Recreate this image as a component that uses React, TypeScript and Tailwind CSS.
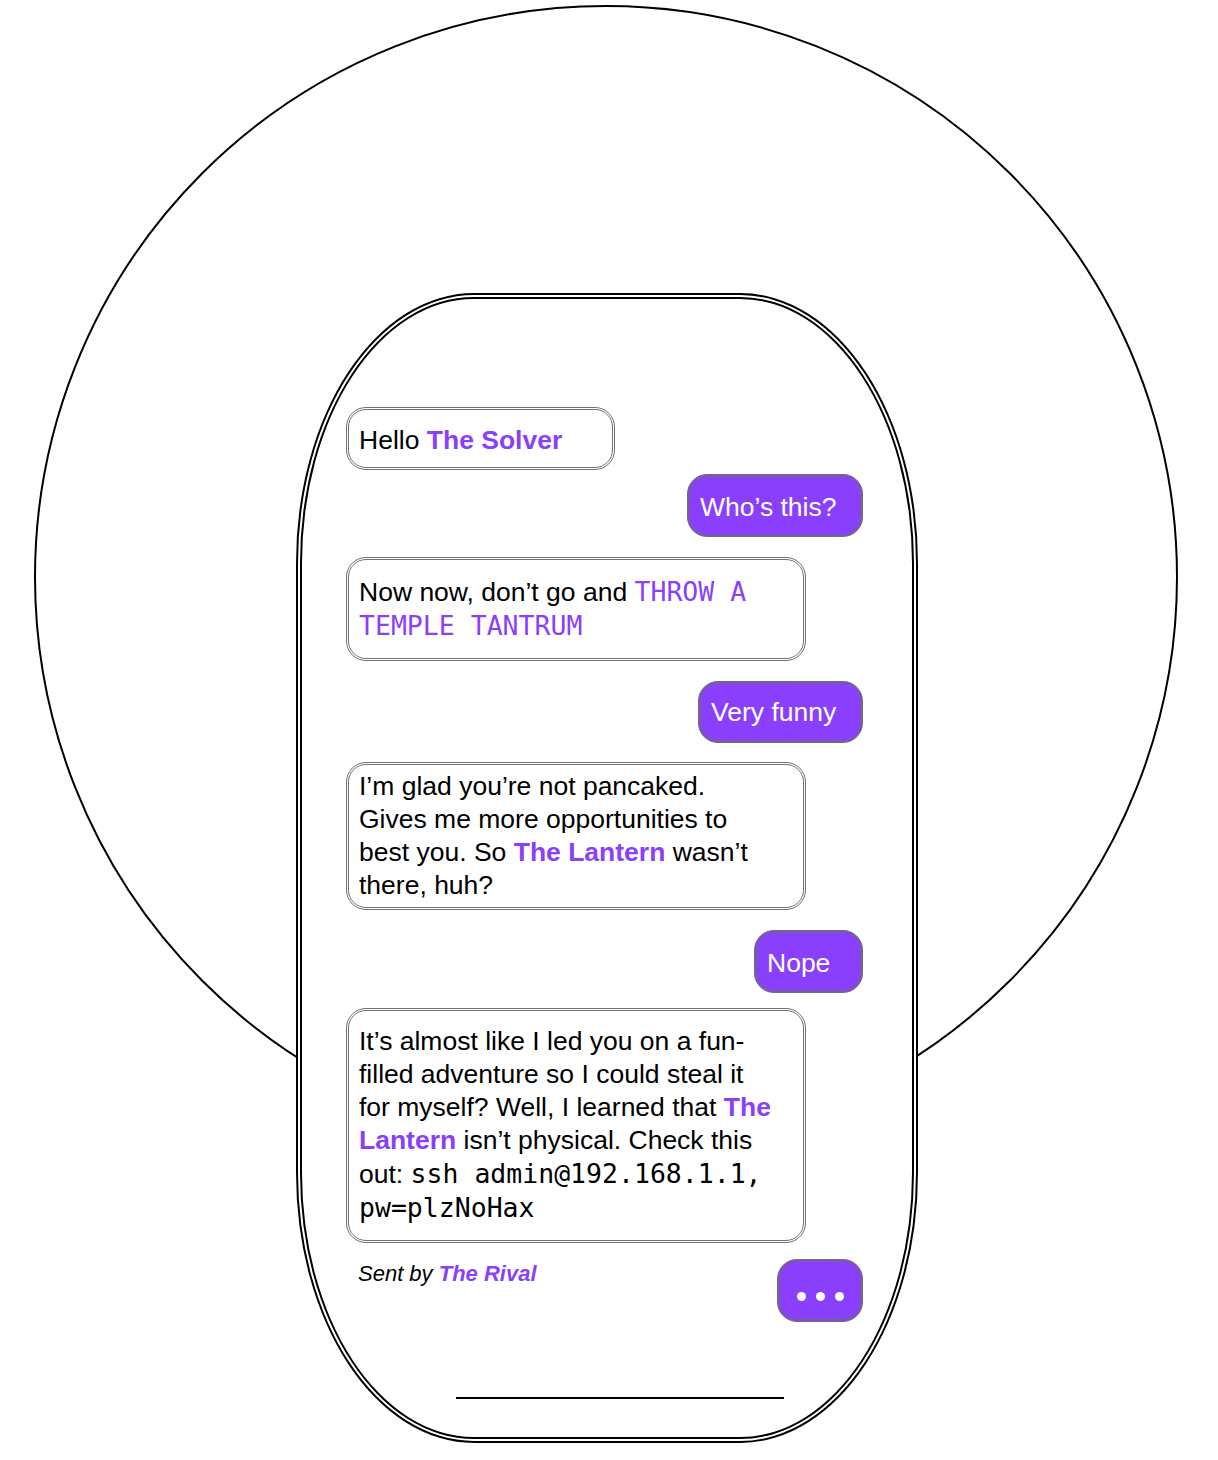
import type { ReactNode } from 'react'

const SANS = "font-['Liberation_Sans',Arial,sans-serif]"

function Hl({ children }: { children: ReactNode }) {
  return <span className="font-bold text-[#8a3ffc]">{children}</span>
}

function Mono({ children, purple }: { children: ReactNode; purple?: boolean }) {
  return (
    <span className={`font-['DejaVu_Sans_Mono',monospace] ${purple ? 'text-[#8a3ffc]' : 'text-black'}`}>
      {children}
    </span>
  )
}

interface BubbleProps {
  me?: boolean
  className?: string
  children: ReactNode
}

function Bubble({ me, className = '', children }: BubbleProps) {
  const tone = me
    ? 'self-end bg-[#8a3ffc] text-white whitespace-nowrap pr-[10px]'
    : 'self-start bg-white text-black'
  return (
    <div
      className={`rounded-[20px] border-[3px] border-double border-[#6f6f6f] pl-[10px] text-[26.5px] leading-[33px] ${tone} ${className}`}
    >
      {children}
    </div>
  )
}

export default function App() {
  return (
    <div className={`relative h-[1460px] w-full overflow-hidden bg-white ${SANS}`}>
      {/* backdrop ring */}
      <div className="absolute left-[34px] top-[5px] h-[1144px] w-[1144px] rounded-full border-2 border-black" />

      <div className="relative ml-[296px] mt-[293px] flex h-[1150px] w-[622px] flex-col rounded-[178px/270px] border-[6px] border-double border-black bg-white pl-[44px] pr-[49px] pt-[108px]">
        <Bubble className="w-[269px] pr-[10px] pt-[14px] pb-[10px]">
          Hello <Hl>The Solver</Hl>
        </Bubble>

        <Bubble me className="mt-[4px] w-[176px] pt-[14px] pb-[10px]">
          Who’s this?
        </Bubble>

        <Bubble className="mt-[20px] w-[460px] pr-[30px] pt-[15px] pb-[15px]">
          Now now, don’t go and <Mono purple>THROW A TEMPLE TANTRUM</Mono>
        </Bubble>

        <Bubble me className="mt-[20px] w-[165px] pt-[12px] pb-[11px]">
          Very funny
        </Bubble>

        <Bubble className="mt-[19px] w-[460px] pr-[30px] pt-[5px] pb-[5px]">
          I’m glad you’re not pancaked. Gives me more opportunities to best you. So{' '}
          <Hl>The Lantern</Hl> wasn’t there, huh?
        </Bubble>

        <Bubble me className="mt-[20px] w-[109px] pt-[14px] pb-[10px]">
          Nope
        </Bubble>

        <Bubble className="mt-[15px] w-[460px] pr-[30px] pt-[14px] pb-[15px]">
          It’s almost like I led you on a fun-filled adventure so I could steal it for myself? Well, I
          learned that <Hl>The Lantern</Hl> isn’t physical. Check this out:{' '}
          <Mono>ssh admin@192.168.1.1, pw=plzNoHax</Mono>
        </Bubble>

        <div className="mt-[16px] flex items-start justify-between">
          <p className="ml-[12px] mt-[1px] text-[22px] italic leading-[28px] text-black">
            Sent by <span className="font-bold text-[#8a3ffc]">The Rival</span>
          </p>
          <div className="flex h-[63px] w-[86px] items-end justify-center gap-[10px] rounded-[20px] border-[3px] border-double border-[#6f6f6f] bg-[#8a3ffc] pb-[18px]">
            <span className="h-[9px] w-[9px] rounded-full bg-white" />
            <span className="h-[9px] w-[9px] rounded-full bg-white" />
            <span className="h-[9px] w-[9px] rounded-full bg-white" />
          </div>
        </div>

        <div className="ml-[110px] mt-[75px] h-[2px] w-[328px] bg-black" />
      </div>
    </div>
  )
}
